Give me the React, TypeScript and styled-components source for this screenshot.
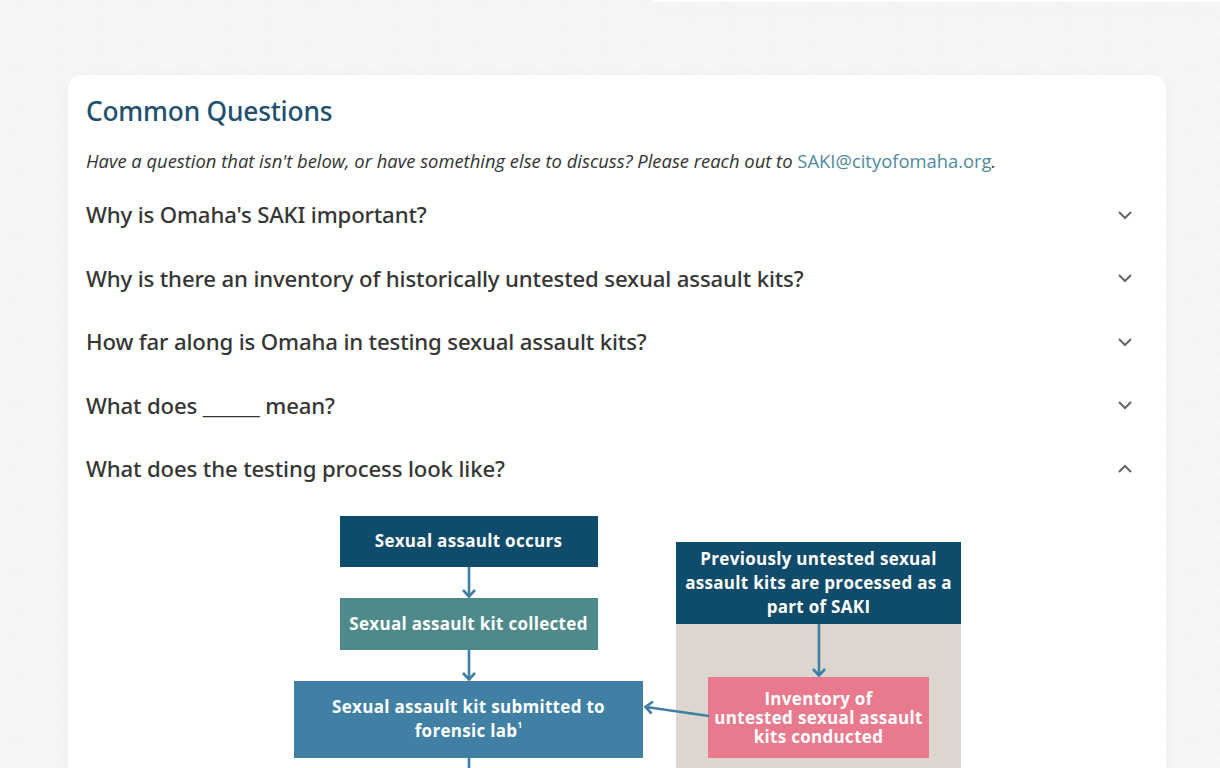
import React from "react";
import styled, { createGlobalStyle } from "styled-components";

const Global = createGlobalStyle`
  html, body { margin: 0; padding: 0; }
  body {
    background-color: #f6f6f6;
    background-image:
      radial-gradient(circle at 50% 100%, transparent 14px, rgba(0,0,0,0.012) 15px, transparent 16px, transparent 19px, rgba(0,0,0,0.012) 20px, transparent 21px),
      radial-gradient(circle at 0% 50%, transparent 14px, rgba(0,0,0,0.012) 15px, transparent 16px, transparent 19px, rgba(0,0,0,0.012) 20px, transparent 21px);
    background-size: 42px 21px;
    font-family: "Open Sans", "Noto Sans", sans-serif;
    overflow: hidden;
  }
`;

const Page = styled.div`
  width: 1220px;
  height: 768px;
  overflow: hidden;
  display: flex;
  flex-direction: column;
`;

const TopStrip = styled.div`
  display: flex;
  justify-content: flex-end;
  height: 2px;
`;

const TopCardEdge = styled.div`
  width: 568px;
  height: 2px;
  background: #fff;
  border-bottom-left-radius: 6px;
  box-shadow: 0 6px 18px rgba(0, 0, 0, 0.08);
`;

const Card = styled.section`
  margin: 73px 0 0 68px;
  width: 1098px;
  background: #fff;
  border-radius: 14px 14px 0 0;
  box-shadow: 0 2px 14px rgba(0, 0, 0, 0.04);
  padding: 18px 0 0 18px;
  box-sizing: border-box;
  flex: 1;
`;

const Title = styled.h2`
  margin: 0;
  font-family: "Noto Sans", "Open Sans", sans-serif;
  font-weight: 500;
  font-size: 26.3px;
  line-height: 36px;
  color: #22506f;
  letter-spacing: -0.2px;
`;

const Intro = styled.p`
  margin: 19px 0 0;
  font-family: "Open Sans", sans-serif;
  font-style: italic;
  font-size: 18.4px;
  line-height: 26px;
  color: #333;
`;

const Link = styled.a`
  font-style: normal;
  color: #4f8a9c;
  text-decoration: none;
`;

const List = styled.div`
  display: flex;
  flex-direction: column;
  margin-top: 9px;
`;

const Item = styled.div`
  display: flex;
  align-items: center;
  justify-content: space-between;
  height: 63.5px;
  padding-right: 33px;
`;

const Question = styled.span`
  font-family: "Noto Sans", "Open Sans", sans-serif;
  font-weight: 500;
  font-size: 22.2px;
  color: #363636;
  letter-spacing: -0.15px;
`;

const Chevron = styled.svg`
  width: 16px;
  height: 10px;
  flex: none;
`;

const Diagram = styled.div`
  position: relative;
  display: flex;
  align-items: flex-start;
  gap: 33px;
  margin: 15px 0 0 208px;
`;

const LeftCol = styled.div`
  width: 349px;
  display: flex;
  flex-direction: column;
  align-items: center;
`;

const RightCol = styled.div`
  width: 285px;
  margin-top: 26px;
  background: #dcd6ce;
  display: flex;
  flex-direction: column;
  align-items: center;
  height: 240px;
`;

const Box = styled.div<{ $bg: string; $w: number; $h: number }>`
  width: ${(p) => p.$w}px;
  height: ${(p) => p.$h}px;
  background: ${(p) => p.$bg};
  color: #fff;
  display: flex;
  align-items: center;
  justify-content: center;
  text-align: center;
  font-family: "Open Sans", sans-serif;
  font-weight: 700;
  font-size: 17px;
  line-height: 24px;
  letter-spacing: 0.3px;
  box-sizing: border-box;
  padding: 0 6px;
`;

const PinkBox = styled(Box)`
  line-height: 19px;
`;

const Sup = styled.sup`
  font-size: 8px;
  line-height: 0;
  vertical-align: 9px;
`;

const VArrow = styled.svg<{ $h: number }>`
  width: 16px;
  height: ${(p) => p.$h}px;
  display: block;
  flex: none;
`;

const Connector = styled.svg`
  position: absolute;
  left: 349px;
  top: 185px;
  width: 68px;
  height: 20px;
  overflow: visible;
`;

const ArrowDown = ({ h }: { h: number }) => (
  <VArrow $h={h} viewBox={`0 0 16 ${h}`}>
    <line x1="8" y1="0" x2="8" y2={h - 1} stroke="#3f7ea6" strokeWidth="2.6" />
    <polyline points={`2,${h - 8} 8,${h - 1.5} 14,${h - 8}`} fill="none" stroke="#3f7ea6" strokeWidth="2.6" />
  </VArrow>
);

const Down = () => (
  <Chevron viewBox="0 0 16 10">
    <polyline points="2,2 8,8 14,2" fill="none" stroke="#666" strokeWidth="2" />
  </Chevron>
);
const Up = () => (
  <Chevron viewBox="0 0 16 10">
    <polyline points="2,8 8,2 14,8" fill="none" stroke="#666" strokeWidth="2" />
  </Chevron>
);

const questions = [
  "Why is Omaha's SAKI important?",
  "Why is there an inventory of historically untested sexual assault kits?",
  "How far along is Omaha in testing sexual assault kits?",
  "What does ______ mean?",
  "What does the testing process look like?",
];

export default function App() {
  return (
    <Page>
      <Global />
      <TopStrip>
        <TopCardEdge />
      </TopStrip>
      <Card>
        <Title>Common Questions</Title>
        <Intro>
          Have a question that isn't below, or have something else to discuss? Please reach out to{" "}
          <Link href="#">SAKI@cityofomaha.org</Link>.
        </Intro>
        <List>
          {questions.map((q, i) => (
            <Item key={q}>
              <Question>{q}</Question>
              {i === questions.length - 1 ? <Up /> : <Down />}
            </Item>
          ))}
        </List>
        <Diagram>
          <LeftCol>
            <Box $bg="#0f4b6a" $w={258} $h={51}>Sexual assault occurs</Box>
            <ArrowDown h={31} />
            <Box $bg="#4f8a8b" $w={258} $h={52}>Sexual assault kit collected</Box>
            <ArrowDown h={31} />
            <Box $bg="#4180a5" $w={349} $h={77}>
              <span>
                Sexual assault kit submitted to
                <br />
                forensic lab<Sup>1</Sup>
              </span>
            </Box>
            <VArrow $h={20} viewBox="0 0 16 20">
              <line x1="8" y1="0" x2="8" y2="20" stroke="#3f7ea6" strokeWidth="2.6" />
            </VArrow>
          </LeftCol>
          <RightCol>
            <Box $bg="#0f4b6a" $w={285} $h={82}>
              <span>
                Previously untested sexual
                <br />
                assault kits are processed as a
                <br />
                part of SAKI
              </span>
            </Box>
            <ArrowDown h={53} />
            <PinkBox $bg="#e97a8d" $w={221} $h={81}>
              <span>
                Inventory of
                <br />
                untested sexual assault
                <br />
                kits conducted
              </span>
            </PinkBox>
          </RightCol>
          <Connector viewBox="0 0 68 20">
            <line x1="66" y1="15" x2="3" y2="6" stroke="#3f7ea6" strokeWidth="2.6" />
            <polyline points="10,0.5 2.5,6 8.5,12.5" fill="none" stroke="#3f7ea6" strokeWidth="2.6" />
          </Connector>
        </Diagram>
      </Card>
    </Page>
  );
}
